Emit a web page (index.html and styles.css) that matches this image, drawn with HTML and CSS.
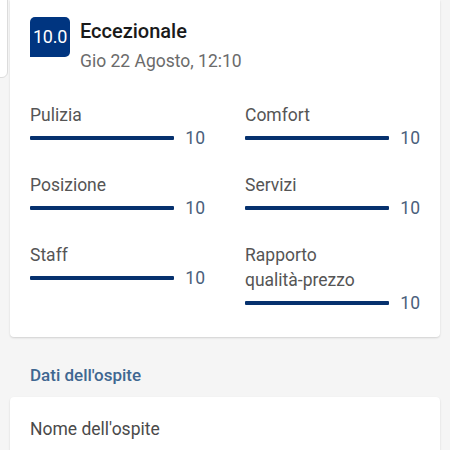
FILE: index.html
```
<!DOCTYPE html>
<html lang="it">
<head>
<meta charset="utf-8">
<link rel="stylesheet" href="styles.css">
</head>
<body>
<div class="side-tab"></div>
<section class="card review">
  <header class="review-head">
    <div class="badge">10.0</div>
    <div class="head-text">
      <div class="title">Eccezionale</div>
      <div class="date">Gio 22 Agosto, 12:10</div>
    </div>
  </header>
  <div class="scores">
    <div class="score">
      <div class="label">Pulizia</div>
      <div class="bar-row"><span class="bar"></span><span class="num">10</span></div>
    </div>
    <div class="score">
      <div class="label">Comfort</div>
      <div class="bar-row"><span class="bar"></span><span class="num">10</span></div>
    </div>
    <div class="score">
      <div class="label">Posizione</div>
      <div class="bar-row"><span class="bar"></span><span class="num">10</span></div>
    </div>
    <div class="score">
      <div class="label">Servizi</div>
      <div class="bar-row"><span class="bar"></span><span class="num">10</span></div>
    </div>
    <div class="score">
      <div class="label">Staff</div>
      <div class="bar-row"><span class="bar"></span><span class="num">10</span></div>
    </div>
    <div class="score">
      <div class="label">Rapporto<br>qualità-prezzo</div>
      <div class="bar-row"><span class="bar"></span><span class="num">10</span></div>
    </div>
  </div>
</section>
<h2 class="section-title">Dati dell'ospite</h2>
<section class="card guest">
  <div class="guest-label">Nome dell'ospite</div>
</section>
</body>
</html>
```
FILE: styles.css
```
html, body {
  margin: 0;
  padding: 0;
}
body {
  background: #f5f5f5;
  font-family: Roboto, "Noto Sans", sans-serif;
  width: 450px;
  height: 450px;
  overflow: hidden;
  position: relative;
}
.side-tab {
  position: absolute;
  left: -12px;
  top: -10px;
  width: 18px;
  height: 86px;
  background: #fff;
  border: 1px solid #dcdcdc;
  border-radius: 0 0 6px 0;
}
.card {
  background: #fff;
  margin: 0 10px;
  border-radius: 0 0 4px 4px;
  box-shadow: 0 1px 2px rgba(0,0,0,0.15);
}
.review {
  padding: 17px 20px 24px 20px;
}
.review-head {
  display: flex;
  gap: 10px;
  align-items: flex-start;
}
.badge {
  width: 40px;
  height: 40px;
  background: #003580;
  color: #fff;
  border-radius: 5px 5px 5px 0;
  font-size: 18px;
  line-height: 40px;
  text-align: center;
  letter-spacing: -0.3px;
}
.head-text {
  padding-top: 2px;
}
.title {
  font-size: 20px;
  font-weight: 500;
  color: #1a1a1a;
  line-height: 24px;
}
.date {
  font-size: 17.5px;
  color: #6b6b6b;
  line-height: 24px;
  margin-top: 6px;
}
.scores {
  display: grid;
  grid-template-columns: 175px 175px;
  column-gap: 40px;
  row-gap: 25px;
  margin-top: 30px;
}
.label {
  font-size: 17.5px;
  color: #555;
  line-height: 25px;
}
.bar-row {
  display: flex;
  align-items: center;
  height: 20px;
}
.bar {
  display: block;
  width: 145px;
  height: 4.5px;
  background: #06316e;
  border-radius: 1px;
}
.num {
  margin-left: 11px;
  font-size: 17.5px;
  color: #4a5f7c;
}
.section-title {
  margin: 0;
  padding: 26px 30px 10px 30px;
  font-size: 17px;
  font-weight: 500;
  color: #3f6791;
  line-height: 24px;
}
.guest {
  border-radius: 4px 4px 0 0;
  padding: 20px 20px 40px 20px;
}
.guest-label {
  font-size: 17.5px;
  color: #4a4a4a;
  line-height: 24px;
}
```
